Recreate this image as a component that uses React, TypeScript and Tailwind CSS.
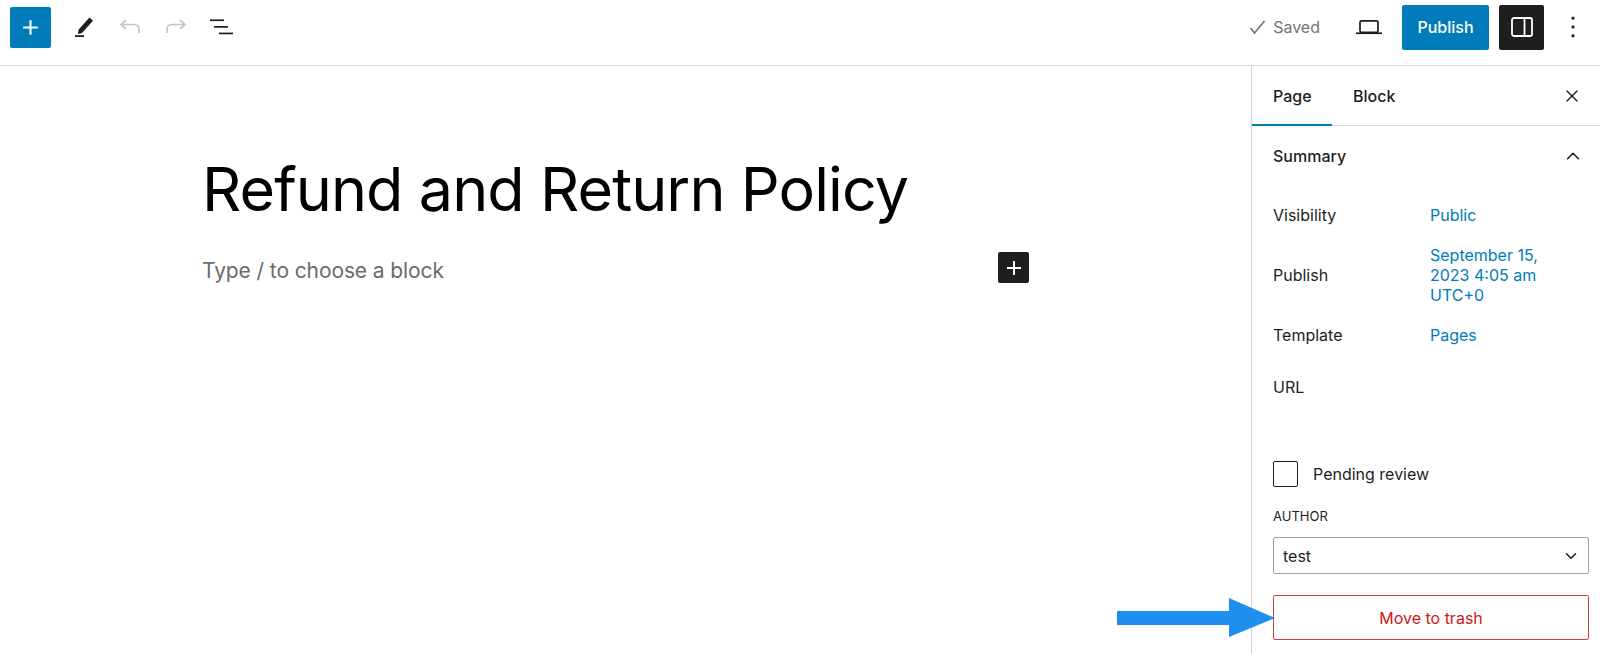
import { X, ChevronUp, ChevronDown } from "lucide-react";

const sans = "font-['Inter','Noto_Sans',sans-serif]";

function PlusIcon({ size = 24 }: { size?: number }) {
  return (
    <svg width={size} height={size} viewBox="0 0 24 24" fill="currentColor">
      <path d="M11 5h2v6h6v2h-6v6h-2v-6H5v-2h6z" />
    </svg>
  );
}

function SummaryRow({ label, value, className }: { label: string; value: string; className: string }) {
  return (
    <div className={`flex items-center ${className}`}>
      <span className="w-[157px] shrink-0">{label}</span>
      <span className="text-[#007cba] leading-[20px] w-[130px]">{value}</span>
    </div>
  );
}

export default function App() {
  return (
    <div className={`relative w-[1600px] h-[654px] overflow-hidden bg-white text-[#1e1e1e] ${sans}`}>
      <header className="h-[66px] border-b border-[#dcdcdc] flex items-center pl-[10px] pr-[15px] pb-[11px]">
        <button className="w-[41px] h-[41px] rounded-[2px] bg-[#007cba] text-white flex items-center justify-center">
          <PlusIcon size={25} />
        </button>
        <div className="ml-[21px] flex items-center gap-[22px]">
          <svg width="24" height="24" viewBox="0 0 24 24" fill="#1e1e1e">
            <path d="M17.5 2.5l3.5 3.3-11 12.2-4.2 1 .9-4.4z" />
            <rect x="3" y="20.2" width="9" height="1.8" />
          </svg>
          <svg width="24" height="24" viewBox="0 0 24 24" fill="none" stroke="#c4c4c4" strokeWidth="1.7">
            <path d="M8 5L3 9.5 8 14M3.2 9.5H16c3 0 5 2 5 4.6V18" />
          </svg>
          <svg width="24" height="24" viewBox="0 0 24 24" fill="none" stroke="#c4c4c4" strokeWidth="1.7">
            <path d="M16 5l5 4.5-5 4.5M20.8 9.5H8c-3 0-5 2-5 4.6V18" />
          </svg>
          <svg width="24" height="24" viewBox="0 0 24 24" fill="#1e1e1e">
            <rect x="0" y="4.4" width="14" height="1.7" />
            <rect x="4" y="11" width="14" height="1.7" />
            <rect x="9" y="17.6" width="14" height="1.7" />
          </svg>
        </div>
        <div className="ml-auto flex items-center text-[#757575] text-[16px]">
          <svg width="24" height="24" viewBox="0 0 24 24" fill="none" stroke="#6b6b6b" strokeWidth="1.5" className="mr-[4px]">
            <path d="M5.5 13l4 5L19.5 6" />
          </svg>
          <span>Saved</span>
        </div>
        <svg width="26" height="24" viewBox="0 0 26 24" fill="none" className="ml-[36px]">
          <rect x="4" y="5.8" width="18" height="11.5" rx="1.5" stroke="#1e1e1e" strokeWidth="1.7" />
          <rect x="0" y="17.4" width="26" height="1.7" fill="#1e1e1e" />
        </svg>
        <button className="ml-[20px] w-[87px] h-[45px] rounded-[2px] bg-[#007cba] text-white text-[16px] font-medium">Publish</button>
        <button className="ml-[10px] w-[45px] h-[45px] rounded-[2px] bg-[#1e1e1e] text-white flex items-center justify-center">
          <svg width="24" height="24" viewBox="0 0 24 24" fill="none" stroke="currentColor" strokeWidth="1.8">
            <rect x="2" y="3" width="20" height="18" rx="2" />
            <path d="M14.5 3v18" />
          </svg>
        </button>
        <svg width="24" height="24" viewBox="0 0 24 24" fill="#1e1e1e" className="ml-[17px]">
          <rect x="10.6" y="1.8" width="2.8" height="2.8" />
          <rect x="10.6" y="10.6" width="2.8" height="2.8" />
          <rect x="10.6" y="19.4" width="2.8" height="2.8" />
        </svg>
      </header>

      <div className="flex h-[588px]">
        <main className="flex-1 pl-[202px]">
          <h1 className="mt-[86px] text-[61px] leading-[74px] font-normal tracking-[-0.9px] text-black">Refund and Return Policy</h1>
          <div className="mt-[26px] flex items-start w-[827px] justify-between">
            <span className="mt-[3px] text-[21px] leading-[31px] tracking-[-0.1px] text-[#6b6b6b]">Type / to choose a block</span>
            <button className="w-[31px] h-[31px] rounded-[2px] bg-[#1e1e1e] text-white flex items-center justify-center">
              <PlusIcon size={24} />
            </button>
          </div>
        </main>

        <aside className="w-[349px] shrink-0 border-l border-[#d4d4d4] text-[16px]">
          <div className="h-[60px] border-b border-[#dcdcdc] flex items-center">
            <div className="w-[80px] h-full flex items-center pl-[21px] font-medium relative">
              Page
              <span className="absolute left-0 right-0 bottom-[-1px] h-[2px] bg-[#007cba]"></span>
            </div>
            <span className="ml-[21px] font-medium">Block</span>
            <X size={20} strokeWidth={1.7} className="ml-auto mr-[18px]" />
          </div>
          <div className="pl-[21px] pr-[11px]">
            <div className="h-[60px] flex items-center justify-between font-medium pr-[5px]">
              Summary
              <ChevronUp size={22} strokeWidth={1.7} />
            </div>
            <SummaryRow label="Visibility" value="Public" className="h-[20px] mt-[19px]" />
            <SummaryRow label="Publish" value="September 15, 2023 4:05 am UTC+0" className="h-[60px] mt-[20px]" />
            <SummaryRow label="Template" value="Pages" className="h-[20px] mt-[20px]" />
            <div className="h-[20px] mt-[32px] flex items-center">URL</div>
            <label className="mt-[64px] h-[26px] flex items-center">
              <span className="w-[25px] h-[26px] rounded-[2px] border border-[#1e1e1e] inline-block"></span>
              <span className="ml-[15px]">Pending review</span>
            </label>
            <div className="mt-[21px] text-[13px] leading-[16px]">AUTHOR</div>
            <div className="mt-[13px] h-[37px] border border-[#a0a0a0] rounded-[2px] flex items-center justify-between pl-[9px] pr-[8px]">
              test
              <ChevronDown size={18} strokeWidth={2} />
            </div>
            <button className="mt-[21px] w-full h-[45px] border border-[#d63c3c] rounded-[2px] text-[#cc1818]">Move to trash</button>
          </div>
        </aside>
      </div>

      {/* annotation arrow */}
      <svg className="absolute left-[1117px] top-[598px]" width="160" height="42" viewBox="0 0 160 42">
        <path d="M0 13H112V0L158 20 112 39V27H0z" fill="#1e8fee" />
      </svg>
    </div>
  );
}
